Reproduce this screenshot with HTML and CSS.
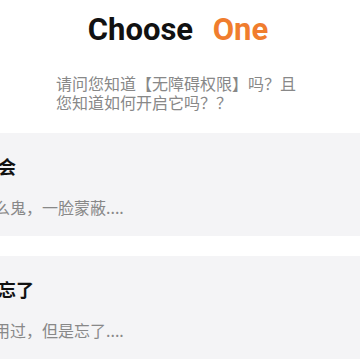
FILE: index.html
```html
<!DOCTYPE html>
<html lang="zh">
<head>
<meta charset="utf-8">
<link rel="stylesheet" href="styles.css">
</head>
<body>
<div class="page">
  <h1 class="title">Choose <span class="accent">One</span></h1>
  <p class="question">请问您知道【无障碍权限】吗？且您知道如何开启它吗？？</p>
  <div class="options">
    <div class="card">
      <div class="card-title">我不会</div>
      <div class="card-desc">这什么鬼，一脸蒙蔽....</div>
    </div>
    <div class="card">
      <div class="card-title">好像忘了</div>
      <div class="card-desc">以前用过，但是忘了....</div>
    </div>
  </div>
</div>
</body>
</html>
```
FILE: styles.css
```css
html, body {
  margin: 0;
  padding: 0;
  overflow: hidden;
  background: #ffffff;
}
body {
  width: 360px;
  height: 360px;
  font-family: "Noto Sans CJK SC", "Noto Sans", sans-serif;
}
.page {
  display: flex;
  flex-direction: column;
}
.title {
  margin: 12px 0 0;
  padding-right: 4px;
  font-family: Roboto, "Liberation Sans", sans-serif;
  font-weight: 700;
  font-size: 31px;
  line-height: 36px;
  color: #111111;
  text-align: center;
}
.accent {
  color: #f07d2e;
  margin-left: 12px;
}
.question {
  width: 250px;
  margin: 26px auto 0;
  padding-left: 2px;
  font-size: 16px;
  line-height: 19px;
  color: #888888;
}
.options {
  margin: 21px -40px 0 -58px;
  display: flex;
  flex-direction: column;
  gap: 20px;
}
.card {
  background: #f4f4f6;
  padding: 20px 20px 16px;
  display: flex;
  flex-direction: column;
}
.card-title {
  font-size: 18px;
  line-height: 27px;
  font-weight: 700;
  color: #111111;
}
.card-desc {
  margin-top: 14px;
  font-size: 16px;
  line-height: 26px;
  color: #888888;
}
```
